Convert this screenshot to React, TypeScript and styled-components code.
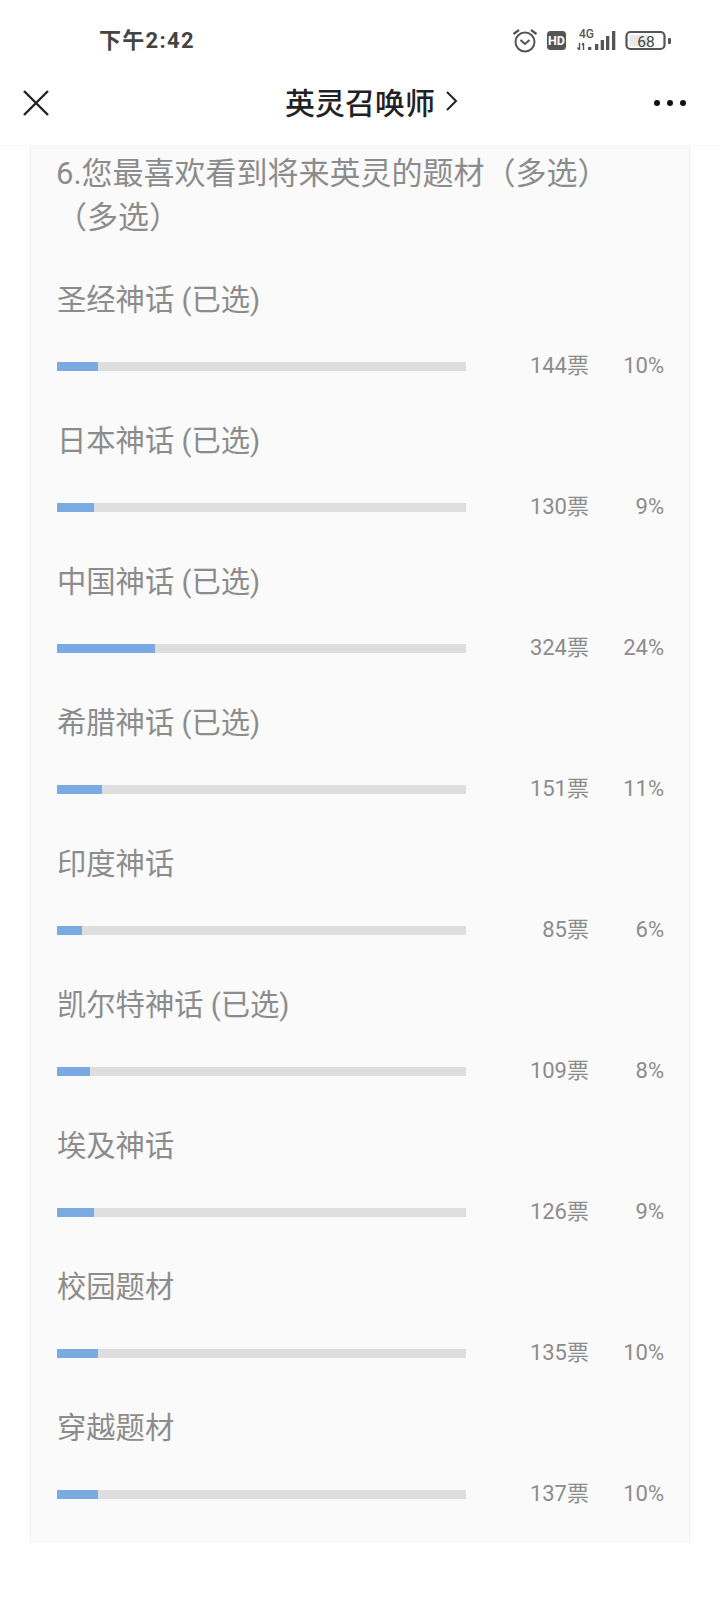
import React from "react";
import styled, { createGlobalStyle } from "styled-components";

type Option = {
	label: string;
	picked?: boolean;
	votes: number;
	percent: number;
};

const options: Option[] = [
	{ label: "圣经神话", picked: true, votes: 144, percent: 10 },
	{ label: "日本神话", picked: true, votes: 130, percent: 9 },
	{ label: "中国神话", picked: true, votes: 324, percent: 24 },
	{ label: "希腊神话", picked: true, votes: 151, percent: 11 },
	{ label: "印度神话", votes: 85, percent: 6 },
	{ label: "凯尔特神话", picked: true, votes: 109, percent: 8 },
	{ label: "埃及神话", votes: 126, percent: 9 },
	{ label: "校园题材", votes: 135, percent: 10 },
	{ label: "穿越题材", votes: 137, percent: 10 },
];

const StatusIcons = () => (
	<StatusSvg width="176" height="30" viewBox="0 0 176 30">
		{/* alarm */}
		<g fill="none" stroke="#555" strokeWidth="2">
			<circle cx="20" cy="17" r="9.5" />
			<path d="M15.500 15l4.500 4 4.500-4" />
			<path d="M8.500 9l5.500-4M31.500 9l-5.500-4" strokeWidth="2.200" />
		</g>
		{/* hd */}
		<rect x="42" y="6" width="19" height="19" rx="3.500" fill="#555" />
		<text x="51.500" y="20" fontSize="12.500" fontWeight="700" fill="#fff" textAnchor="middle" fontFamily="Roboto, sans-serif">
			HD
		</text>
		{/* network */}
		<text x="74" y="13" fontSize="12" fontWeight="500" fill="#555" fontFamily="Roboto, sans-serif">
			4G
		</text>
		<path d="M74.500 18v7M72.500 22.500l2 2.500M78.500 18v7M77 20l1.500-2" fill="none" stroke="#555" strokeWidth="1.400" />
		<g fill="#555">
			<rect x="83" y="22" width="3.300" height="3" />
			<rect x="90" y="19" width="3.300" height="6" />
			<rect x="95.700" y="15" width="3.300" height="10" />
			<rect x="101" y="11" width="3.300" height="14" />
			<rect x="107" y="6" width="3.300" height="19" />
		</g>
		{/* battery */}
		<rect x="121.500" y="7" width="38" height="17" rx="4" fill="#fff" stroke="#555" strokeWidth="2.200" />
		<rect x="124.500" y="10" width="19" height="11" fill="#e8e8e8" />
		<rect x="163" y="13" width="3" height="6" rx="1" fill="#555" />
		<text x="141" y="22" fontSize="15.500" fill="#444" textAnchor="middle" fontFamily="Roboto, sans-serif">
			68
		</text>
	</StatusSvg>
);

export default function App() {
	return (
		<>
			<GlobalStyle />
			<Page>
				<StatusBar>
					<Time>下午2:42</Time>
					<StatusIcons />
				</StatusBar>
				<NavBar>
					<svg width="28" height="28" viewBox="0 0 28 28">
						<path d="M2 2l24 24M26 2L2 26" stroke="#222" strokeWidth="2.400" fill="none" />
					</svg>
					<Title>
						英灵召唤师
						<svg width="14" height="22" viewBox="0 0 14 22">
							<path d="M3 2l9 9-9 9" stroke="#222" strokeWidth="2" fill="none" />
						</svg>
					</Title>
					<Dots>
						<Dot />
						<Dot />
						<Dot />
					</Dots>
				</NavBar>
				<Card>
					<Question>6.您最喜欢看到将来英灵的题材（多选）（多选）</Question>
					{options.map(o => (
						<Row key={o.label}>
							<Label>
								{o.label}
								{o.picked ? " (已选)" : ""}
							</Label>
							<Stats>
								<Track>
									<Fill style={{ width: `${o.percent}%` }} />
								</Track>
								<Votes>{o.votes}票</Votes>
								<Percent>{o.percent}%</Percent>
							</Stats>
						</Row>
					))}
				</Card>
			</Page>
		</>
	);
}

const GlobalStyle = createGlobalStyle`
	html, body {
		margin: 0;
		padding: 0;
		background: #fff;
	}
	body {
		font-family: Roboto, "Noto Sans CJK SC", sans-serif;
	}
`;

const Page = styled.div`
	width: 720px;
	height: 1600px;
	overflow: hidden;
	background: #fff;
`;

const StatusBar = styled.div`
	height: 76px;
	display: flex;
	align-items: center;
	justify-content: space-between;
	padding: 0 39px 0 99px;
	box-sizing: border-box;
`;

const Time = styled.span`
	font-size: 22px;
	font-weight: 700;
	letter-spacing: 1.3px;
	color: #444;
`;

const StatusSvg = styled.svg`
	display: block;
	margin-top: 4px;
`;

const NavBar = styled.header`
	height: 70px;
	box-sizing: border-box;
	display: flex;
	align-items: center;
	justify-content: space-between;
	padding: 0 34px 16px 22px;
	background: #fff;
	border-bottom: 1px solid #f6f6f6;
`;

const Title = styled.h1`
	margin: 0 0 4px 39px;
	display: flex;
	align-items: center;
	gap: 9px;
	font-size: 30px;
	font-weight: 500;
	color: #222;
`;

const Dots = styled.div`
	display: flex;
	gap: 7px;
`;

const Dot = styled.span`
	width: 6px;
	height: 6px;
	border-radius: 50%;
	background: #111;
`;

const Card = styled.section`
	margin: 0 30px;
	height: 1397px;
	box-sizing: border-box;
	padding: 6px 25px 0 26px;
	background: #fafafa;
	border-left: 1px solid #eee;
	border-right: 1px solid #eee;
`;

const Question = styled.h2`
	margin: 0 0 -4px -1px;
	width: 560px;
	font-size: 31px;
	font-weight: 400;
	line-height: 44px;
	color: #8c8c8c;
`;

const Row = styled.div`
	height: 141px;
	padding-top: 49px;
	box-sizing: border-box;
`;

const Label = styled.div`
	font-size: 29.3px;
	line-height: 30px;
	color: #8c8c8c;
`;

const Stats = styled.div`
	margin-top: 40px;
	height: 22px;
	display: flex;
	align-items: center;
	color: #8c8c8c;
	font-size: 22px;
	line-height: 22px;
`;

const Track = styled.div`
	width: 409px;
	height: 9px;
	margin-top: 1px;
	background: #dedede;
`;

const Fill = styled.div`
	height: 100%;
	background: #7baae2;
`;

const Votes = styled.span`
	width: 123px;
	text-align: right;
`;

const Percent = styled.span`
	width: 75px;
	text-align: right;
`;
